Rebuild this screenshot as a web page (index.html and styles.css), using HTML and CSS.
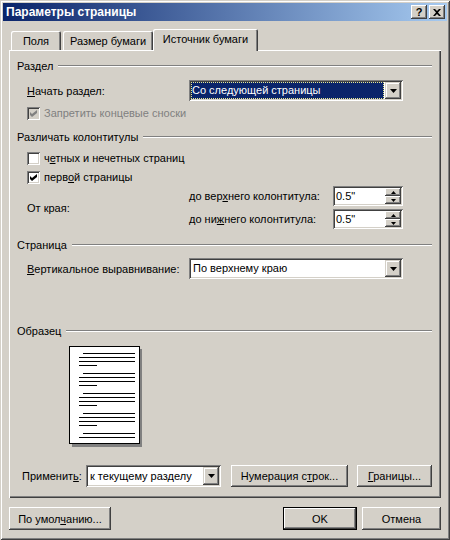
FILE: index.html
```html
<!DOCTYPE html>
<html lang="ru">

<head>
    <meta charset="UTF-8">
    <title>Параметры страницы</title>
    <link rel="stylesheet" href="styles.css">
</head>

<body>
    <div class="window">
        <div class="titlebar">
            <span class="title">Параметры страницы</span>
            <div class="tb-buttons">
                <span class="tb-btn">?</span>
                <span class="tb-btn">
                    <svg width="8" height="7" viewBox="0 0 8 7"><path d="M0 0h2l2 2 2-2h2L5 3.5 8 7H6L4 5 2 7H0l3-3.5z" fill="#000"/></svg>
                </span>
            </div>
        </div>

        <div class="client">
            <div class="tabs">
                <div class="tab">Поля</div>
                <div class="tab">Размер бумаги</div>
                <div class="tab active">Источник бумаги</div>
            </div>

            <div class="panel">
                <!-- Раздел -->
                <div class="group-head g-section"><span>Раздел</span><i class="groove"></i></div>
                <div class="row row-start">
                    <span class="label-wide"><u>Н</u>ачать раздел:</span>
                    <div class="combo combo-wide">
                        <span class="combo-text selected">Со следующей страницы</span>
                        <span class="drop"><svg width="7" height="4" viewBox="0 0 7 4"><path d="M0 0h7L3.5 4z" fill="#000"/></svg></span>
                    </div>
                </div>
                <div class="check-row cb-endnotes disabled">
                    <span class="checkbox gray">
                        <svg width="7" height="7" viewBox="0 0 7 7"><path d="M0 2l2 2 5-4v3L2 7 0 5z" fill="#808080"/></svg>
                    </span>
                    <span>Запретить концевые сноски</span>
                </div>

                <!-- Колонтитулы -->
                <div class="group-head g-headers"><span>Различать колонтитулы</span><i class="groove"></i></div>
                <div class="check-row cb-odd">
                    <span class="checkbox"></span>
                    <span>ч<u>е</u>тных и нечетных страниц</span>
                </div>
                <div class="check-row cb-first">
                    <span class="checkbox">
                        <svg width="7" height="7" viewBox="0 0 7 7"><path d="M0 2l2 2 5-4v3L2 7 0 5z" fill="#000"/></svg>
                    </span>
                    <span>перв<u>о</u>й страницы</span>
                </div>
                <div class="edge-block">
                    <span class="label-wide">От края:</span>
                    <div class="spin-rows">
                        <div class="spin-row">
                            <span class="spin-label">до вер<u>х</u>него колонтитула:</span>
                            <div class="spin">
                                <span class="spin-text">0.5"</span>
                                <span class="spin-btns">
                                    <span class="spin-btn"><svg width="5" height="3" viewBox="0 0 5 3"><path d="M2.5 0L5 3H0z" fill="#000"/></svg></span>
                                    <span class="spin-btn"><svg width="5" height="3" viewBox="0 0 5 3"><path d="M0 0h5L2.5 3z" fill="#000"/></svg></span>
                                </span>
                            </div>
                        </div>
                        <div class="spin-row">
                            <span class="spin-label">до ни<u>ж</u>него колонтитула:</span>
                            <div class="spin">
                                <span class="spin-text">0.5"</span>
                                <span class="spin-btns">
                                    <span class="spin-btn"><svg width="5" height="3" viewBox="0 0 5 3"><path d="M2.5 0L5 3H0z" fill="#000"/></svg></span>
                                    <span class="spin-btn"><svg width="5" height="3" viewBox="0 0 5 3"><path d="M0 0h5L2.5 3z" fill="#000"/></svg></span>
                                </span>
                            </div>
                        </div>
                    </div>
                </div>

                <!-- Страница -->
                <div class="group-head g-page"><span>Страница</span><i class="groove"></i></div>
                <div class="row row-valign">
                    <span class="label-wide"><u>В</u>ертикальное выравнивание:</span>
                    <div class="combo combo-wide">
                        <span class="combo-text">По верхнему краю</span>
                        <span class="drop"><svg width="7" height="4" viewBox="0 0 7 4"><path d="M0 0h7L3.5 4z" fill="#000"/></svg></span>
                    </div>
                </div>

                <!-- Образец -->
                <div class="group-head g-sample"><span>Образец</span><i class="groove"></i></div>
                <div class="preview">
                    <svg width="74" height="102" viewBox="0 0 74 102">
                        <rect x="3" y="3" width="70" height="98" fill="#808080"/>
                        <rect x="0.5" y="0.5" width="70" height="97" fill="#fff" stroke="#000"/>
                        <g stroke="#000" stroke-width="1">
                            <path d="M14 7.5h52M10 11.5h56M10 15.5h56M10 19.5h18"/>
                            <path d="M14 27.5h52M10 31.5h56M10 35.5h56M10 39.5h18"/>
                            <path d="M14 47.5h52M10 51.5h56M10 55.5h56M10 59.5h18"/>
                            <path d="M14 67.5h52M10 71.5h56M10 75.5h56M10 79.5h18"/>
                            <path d="M14 87.5h52M10 91.5h56"/>
                        </g>
                    </svg>
                </div>

                <div class="apply-row">
                    <span class="apply-label">Применит<u>ь</u>:</span>
                    <div class="combo combo-apply">
                        <span class="combo-text">к текущему разделу</span>
                        <span class="drop"><svg width="7" height="4" viewBox="0 0 7 4"><path d="M0 0h7L3.5 4z" fill="#000"/></svg></span>
                    </div>
                    <button class="btn btn-lines">Нумерация с<u>т</u>рок...</button>
                    <button class="btn btn-borders"><u>Г</u>раницы...</button>
                </div>
            </div>

            <div class="footer">
                <button class="btn btn-default-set">По умол<u>ч</u>анию...</button>
                <span class="spacer"></span>
                <button class="btn btn-ok">OK</button>
                <button class="btn btn-cancel">Отмена</button>
            </div>
        </div>
    </div>
</body>

</html>
```

FILE: styles.css
```css
body {
    margin: 0;
    background: #d4d0c8;
    font-family: "Liberation Sans", Arial, sans-serif;
    font-size: 11px;
    color: #000;
}

.window {
    width: 450px;
    height: 540px;
    box-sizing: border-box;
    padding: 3px;
    background: #d4d0c8;
    box-shadow: inset 1px 1px #d4d0c8, inset -1px -1px #404040, inset 2px 2px #fff, inset -2px -2px #808080;
}

/* title bar */
.titlebar {
    height: 18px;
    display: flex;
    align-items: center;
    background: linear-gradient(to right, #0a246a, #a6caf0);
    padding: 0 2px 0 3px;
}

.title {
    flex: 1;
    color: #fff;
    font-weight: bold;
    font-size: 12px;
}

.tb-buttons {
    display: flex;
    gap: 2px;
}

.tb-btn {
    width: 16px;
    height: 14px;
    box-sizing: border-box;
    display: flex;
    align-items: center;
    justify-content: center;
    background: #d4d0c8;
    font-weight: bold;
    font-size: 11px;
    line-height: 14px;
    box-shadow: inset -1px -1px #404040, inset 1px 1px #fff, inset -2px -2px #808080;
}

/* client area */
.client {
    padding: 8px 6px 0 6px;
}

.tabs {
    display: flex;
    align-items: flex-end;
    height: 21px;
    padding-left: 2px;
}

.tab {
    height: 19px;
    box-sizing: border-box;
    padding: 4px 0 0 0;
    text-align: center;
    box-shadow: inset 1px 1px #fff, inset -1px 0 #404040, inset -2px 0 #808080;
    border-radius: 2px 2px 0 0;
}

.tab:nth-child(1) {
    width: 50px;
}

.tab:nth-child(2) {
    width: 90px;
    margin-left: 2px;
}

.tab.active {
    width: 105px;
    height: 22px;
    margin-bottom: -1px;
    position: relative;
    z-index: 1;
    background: #d4d0c8;
    padding-top: 4px;
}

.panel {
    height: 448px;
    box-sizing: border-box;
    padding: 1px 9px 0 8px;
    box-shadow: inset 1px 1px #fff, inset -1px -1px #404040, inset -2px -2px #808080;
}

/* group headers */
.group-head {
    display: flex;
    align-items: center;
    gap: 5px;
    height: 14px;
    line-height: 14px;
}

.groove {
    flex: 1;
    height: 0;
    border-top: 1px solid #808080;
    border-bottom: 1px solid #fff;
}

.g-section {
    margin-top: 8px;
}

.g-headers {
    margin-top: 10px;
}

.g-page {
    margin-top: 9px;
}

.g-sample {
    margin-top: 45px;
}

/* rows */
.row {
    display: flex;
    align-items: center;
    margin-left: 10px;
    height: 21px;
}

.row-start {
    margin-top: 7px;
}

.row-valign {
    margin-top: 6px;
}

.label-wide {
    width: 162px;
    flex: none;
}

.check-row {
    display: flex;
    align-items: center;
    gap: 4px;
    margin-left: 10px;
    height: 14px;
}

.check-row.disabled {
    color: #808080;
}

.cb-endnotes {
    margin-top: 5px;
}

.cb-odd {
    margin-top: 7px;
}

.cb-first {
    margin-top: 5px;
}

.checkbox {
    width: 13px;
    height: 13px;
    box-sizing: border-box;
    background: #fff;
    display: flex;
    align-items: center;
    justify-content: center;
    box-shadow: inset 1px 1px #808080, inset -1px -1px #fff, inset 2px 2px #404040, inset -2px -2px #d4d0c8;
}

.checkbox.gray {
    background: #d4d0c8;
}

/* combos */
.combo {
    height: 21px;
    box-sizing: border-box;
    padding: 2px;
    display: flex;
    background: #fff;
    box-shadow: inset 1px 1px #808080, inset -1px -1px #fff, inset 2px 2px #404040, inset -2px -2px #d4d0c8;
}

.combo-wide {
    width: 214px;
}

.combo-text {
    flex: 1;
    padding-left: 2px;
    line-height: 17px;
    white-space: nowrap;
    overflow: hidden;
}

.combo-text.selected {
    background: #0a246a;
    color: #fff;
    outline: 1px dotted #e8e890;
    outline-offset: -1px;
    padding-left: 1px;
    margin-right: 1px;
}

.drop {
    width: 16px;
    height: 17px;
    box-sizing: border-box;
    flex: none;
    display: flex;
    align-items: center;
    justify-content: center;
    background: #d4d0c8;
    box-shadow: inset -1px -1px #404040, inset 1px 1px #d4d0c8, inset -2px -2px #808080, inset 2px 2px #fff;
}

/* spin boxes */
.edge-block {
    display: flex;
    align-items: center;
    margin-left: 10px;
    margin-top: 2px;
}

.spin-rows {
    display: flex;
    flex-direction: column;
    gap: 3px;
}

.spin-row {
    display: flex;
    align-items: center;
}

.spin-label {
    width: 144px;
}

.spin {
    width: 70px;
    height: 20px;
    box-sizing: border-box;
    padding: 2px;
    display: flex;
    background: #fff;
    box-shadow: inset 1px 1px #808080, inset -1px -1px #fff, inset 2px 2px #404040, inset -2px -2px #d4d0c8;
}

.spin-text {
    flex: 1;
    padding-left: 1px;
    line-height: 16px;
}

.spin-btns {
    width: 16px;
    display: flex;
    flex-direction: column;
}

.spin-btn {
    height: 8px;
    display: flex;
    align-items: center;
    justify-content: center;
    background: #d4d0c8;
    box-shadow: inset -1px -1px #404040, inset 1px 1px #fff, inset -2px -2px #808080;
}

/* preview */
.preview {
    margin: 8px 0 0 52px;
    height: 98px;
}

.preview svg {
    display: block;
}

/* apply row */
.apply-row {
    display: flex;
    align-items: center;
    margin: 21px 0 0 5px;
    height: 22px;
}

.apply-label {
    width: 64px;
}

.combo-apply {
    width: 135px;
    height: 22px;
}

.combo-apply .combo-text {
    line-height: 18px;
}

.combo-apply .drop {
    height: 18px;
}

.btn {
    font-family: "Liberation Sans", Arial, sans-serif;
    font-size: 11px;
    color: #000;
    background: #d4d0c8;
    border: none;
    padding: 0;
    height: 22px;
    box-shadow: inset -1px -1px #404040, inset 1px 1px #fff, inset -2px -2px #808080, inset 2px 2px #d4d0c8;
}

.btn-lines {
    width: 117px;
    margin-left: 10px;
}

.btn-borders {
    width: 75px;
    margin-left: 9px;
}

/* footer */
.footer {
    display: flex;
    margin-top: 9px;
}

.footer .btn {
    height: 23px;
}

.spacer {
    flex: 1;
}

.btn-default-set {
    width: 102px;
}

.btn-ok {
    width: 74px;
    margin-right: 5px;
    box-shadow: inset 0 0 0 1px #000, inset -2px -2px #404040, inset 2px 2px #fff, inset -3px -3px #808080;
}

.btn-cancel {
    width: 79px;
}
```
